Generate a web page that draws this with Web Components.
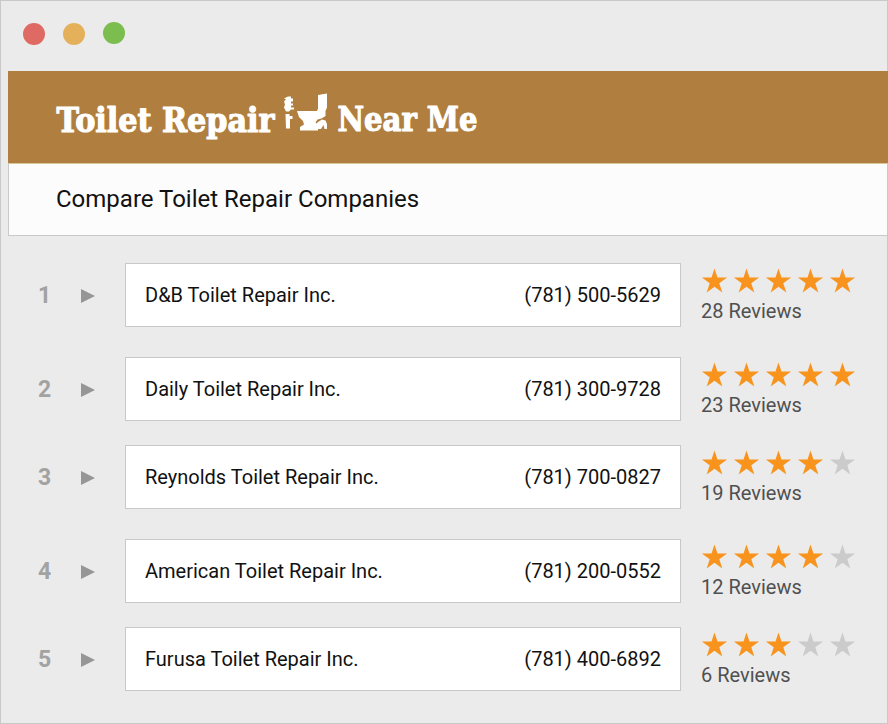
<!DOCTYPE html>
<html lang="en">
<head>
<meta charset="utf-8">
<title>Toilet Repair Near Me</title>
<style>
  body {
    margin: 0;
    background: #ebebeb;
    font-family: Roboto, "Liberation Sans", sans-serif;
    color: #111;
  }
</style>
</head>
<body>
<browser-window>
  <site-header></site-header>
  <page-heading>Compare Toilet Repair Companies</page-heading>
  <company-list>
    <company-row rank="1" phone="(781) 500-5629" stars="5" reviews="28">D&amp;B Toilet Repair Inc.</company-row>
    <company-row rank="2" phone="(781) 300-9728" stars="5" reviews="23">Daily Toilet Repair Inc.</company-row>
    <company-row rank="3" phone="(781) 700-0827" stars="4" reviews="19">Reynolds Toilet Repair Inc.</company-row>
    <company-row rank="4" phone="(781) 200-0552" stars="4" reviews="12">American Toilet Repair Inc.</company-row>
    <company-row rank="5" phone="(781) 400-6892" stars="3" reviews="6">Furusa Toilet Repair Inc.</company-row>
  </company-list>
</browser-window>

<script>
class BrowserWindow extends HTMLElement {
  connectedCallback() {
    this.attachShadow({ mode: 'open' });
    this.shadowRoot.innerHTML = `
      <style>
        :host {
          display: block;
          box-sizing: border-box;
          width: 888px;
          height: 724px;
          border: 1px solid #c9c9c9;
          background: #ebebeb;
        }

        .bar {
          display: block;
          width: 200px;
          height: 70px;
        }

        .content {
          margin: 0 -1px 0 7px;
        }
      </style>
      <svg class="bar" viewBox="1 1 200 70">
        <circle cx="34" cy="34" r="11" fill="#de6a63"/>
        <circle cx="74" cy="34" r="11" fill="#e4b15a"/>
        <circle cx="114" cy="33" r="11" fill="#7bbd4e"/>
      </svg>
      <div class="content"><slot></slot></div>
    `;
  }
}

class SiteHeader extends HTMLElement {
  connectedCallback() {
    this.attachShadow({ mode: 'open' });
    this.shadowRoot.innerHTML = `
      <style>
        :host {
          display: block;
          height: 92px;
          background: #b07f3f;
        }

        svg {
          display: block;
        }

        text {
          font: bold 34px "DejaVu Serif Condensed", "DejaVu Serif", serif;
          font-stretch: condensed;
          fill: #fff;
          stroke: #fff;
          stroke-width: 1.1px;
          stroke-linejoin: round;
        }
      </style>
      <svg width="520" height="92" viewBox="8 71 520 92">
        <text x="56.5" y="131.5" textLength="218" lengthAdjust="spacingAndGlyphs">Toilet Repair</text>
        <g fill="#fff">
          <path d="M285 98l3-1.500h3v2h2v3h-2v2h2v2h-2v2h3v2h-3l-2 2h-3l-2-4 1-3-1-3 2-2-2-1z"/>
          <path d="M285.500 114h4v2h3v3h-2.500v9.500h-4z"/>
          <path d="M318 95l9-1.500v14l-1.500 3.500v5l-4 2.500-4 1-2 3 2.500 2v6h-18v-3.500l4-2.500-1-3.500-4-4-2-6h20l1-2.500z"/>
          <path d="M318 122l4-2.500 3.500 1 1.500 3.500v5h-2.500l-1-4-2.500 4h-3v-3l-2.500-1z"/>
        </g>
        <text x="337.5" y="130.500" textLength="140" lengthAdjust="spacingAndGlyphs">Near Me</text>
      </svg>
    `;
  }
}

class PageHeading extends HTMLElement {
  connectedCallback() {
    this.attachShadow({ mode: 'open' });
    this.shadowRoot.innerHTML = `
      <style>
        :host {
          display: flex;
          align-items: center;
          box-sizing: border-box;
          height: 73px;
          padding: 0 47px 1px;
          border: 1px solid #c8caca;
          border-top-color: #d6c79a;
          background: #fcfcfc;
        }

        h1 {
          margin: 0;
          font-size: 24px;
          font-weight: 400;
          line-height: 28px;
        }
      </style>
      <h1><slot></slot></h1>
    `;
  }
}

class CompanyList extends HTMLElement {
  connectedCallback() {
    this.attachShadow({ mode: 'open' });
    this.shadowRoot.innerHTML = `
      <style>
        :host {
          display: block;
          padding-top: 27px;
        }

        ::slotted(:nth-child(odd)) {
          margin-bottom: 30px;
        }

        ::slotted(:nth-child(even)) {
          margin-bottom: 24px;
        }

        ::slotted(:last-child) {
          margin-bottom: 0;
        }
      </style>
      <slot></slot>
    `;
  }
}

class CompanyRow extends HTMLElement {
  connectedCallback() {
    this.attachShadow({ mode: 'open' });
    this.shadowRoot.innerHTML = `
      <style>
        :host {
          display: grid;
          grid-template-columns: 73px 44px 556px auto;
          align-items: center;
          height: 64px;
        }

        .rank {
          padding: 2px 0 0 30px;
          font-size: 23px;
          font-weight: 700;
          line-height: 26px;
          color: #a2a2a2;
        }

        .arrow {
          display: block;
          margin-top: 2px;
        }

        .card {
          display: flex;
          align-items: center;
          justify-content: space-between;
          box-sizing: border-box;
          height: 64px;
          padding: 0 19px;
          border: 1px solid #c8c8c8;
          background: #fff;
          font-size: 20px;
        }

        .reviews {
          padding-left: 20px;
          font-size: 20px;
          line-height: 24px;
          color: #505050;
        }

        star-rating {
          margin-bottom: 5px;
        }
      </style>
      <div class="rank">${this.getAttribute('rank')}</div>
      <svg class="arrow" width="14" height="16"><path d="M0 1l14 7-14 7z" fill="#969696"/></svg>
      <div class="card">
        <span><slot></slot></span>
        <span>${this.getAttribute('phone')}</span>
      </div>
      <div class="reviews">
        <star-rating value="${this.getAttribute('stars')}"></star-rating>
        ${this.getAttribute('reviews')} Reviews
      </div>
    `;
  }
}

class StarRating extends HTMLElement {
  connectedCallback() {
    const value = Number(this.getAttribute('value'));
    let stars = '';
    for (let i = 0; i < 5; i++) {
      stars += `<svg width="26" height="26" viewBox="0 0 26 26" fill="${i < value ? '#f8941d' : '#cbcbcb'}">
        <path d="M13.5 0.5l3 9.1h9.6l-7.8 5.6 3 9.2-7.8-5.7-7.8 5.7 3-9.2-7.8-5.6h9.6z"/>
      </svg>`;
    }
    this.attachShadow({ mode: 'open' });
    this.shadowRoot.innerHTML = `
      <style>
        :host {
          display: flex;
          gap: 6px;
        }

        svg {
          display: block;
          overflow: visible;
        }
      </style>
      ${stars}
    `;
  }
}

customElements.define('browser-window', BrowserWindow);
customElements.define('site-header', SiteHeader);
customElements.define('page-heading', PageHeading);
customElements.define('company-list', CompanyList);
customElements.define('company-row', CompanyRow);
customElements.define('star-rating', StarRating);
</script>
</body>
</html>
